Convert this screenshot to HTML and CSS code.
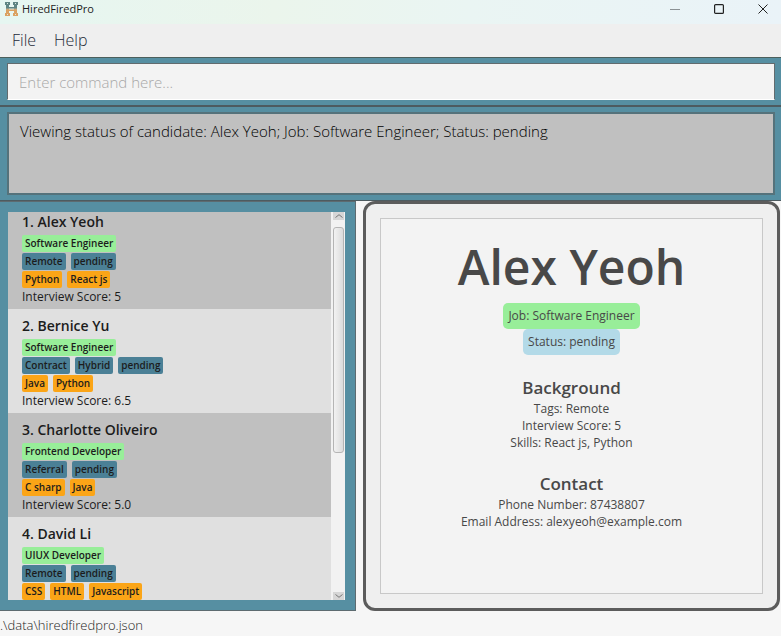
FILE: index.html
```html
<!DOCTYPE html>
<html lang="en">
<head>
<meta charset="utf-8">
<title>HiredFiredPro</title>
<link rel="stylesheet" href="styles.css">
</head>
<body>
<header class="titlebar">
  <svg class="logo" viewBox="0 0 13 14" aria-hidden="true">
    <path fill="#5f8583" d="M0 0h5v3H4v2h5V3H8V0h5v3h-1v4H1V3H0z"/>
    <path fill="#dba263" d="M1 7h11v4h1v3H8v-3h1V9H4v2h1v3H0v-3h1z"/>
    <path fill="#dfe9e2" d="M2 1h1v1H2zM10 1h1v1h-1zM2 12h1v1H2zM10 12h1v1h-1zM4 6.500h5v1H4z"/>
    <path fill="#b9a888" d="M1 6.500h3v1H1zM9 6.500h3v1H9z"/>
  </svg>
  <span class="app-name">HiredFiredPro</span>
  <div class="window-buttons">
    <button type="button" aria-label="Minimize"><svg viewBox="0 0 10 10"><path d="M0 5.500h10" stroke="#8b9194"/></svg></button>
    <button type="button" aria-label="Maximize"><svg viewBox="0 0 10 10"><rect x=".6" y=".6" width="8.800" height="8.800" rx="1" stroke-width="1.200"/></svg></button>
    <button type="button" aria-label="Close"><svg viewBox="0 0 10 10"><path d="M.5.5l9 9M9.500.5l-9 9"/></svg></button>
  </div>
</header>
<nav class="menubar">
  <button type="button">File</button>
  <button type="button">Help</button>
</nav>
<section class="command">
  <input class="command-box" type="text" placeholder="Enter command here..." aria-label="Command">
</section>
<section class="result">
  <output class="result-box">Viewing status of candidate: Alex Yeoh; Job: Software Engineer; Status: pending</output>
</section>
<main class="content">
  <section class="list-panel">
    <div class="list">
      <ol class="cells">
        <li class="cell">
          <h2>1. Alex Yeoh</h2>
          <div class="tags job"><span>Software Engineer</span></div>
          <div class="tags label"><span>Remote</span><span>pending</span></div>
          <div class="tags skill"><span>Python</span><span>React js</span></div>
          <p>Interview Score: 5</p>
        </li>
        <li class="cell">
          <h2>2. Bernice Yu</h2>
          <div class="tags job"><span>Software Engineer</span></div>
          <div class="tags label"><span>Contract</span><span>Hybrid</span><span>pending</span></div>
          <div class="tags skill"><span>Java</span><span>Python</span></div>
          <p>Interview Score: 6.5</p>
        </li>
        <li class="cell">
          <h2>3. Charlotte Oliveiro</h2>
          <div class="tags job"><span>Frontend Developer</span></div>
          <div class="tags label"><span>Referral</span><span>pending</span></div>
          <div class="tags skill"><span>C sharp</span><span>Java</span></div>
          <p>Interview Score: 5.0</p>
        </li>
        <li class="cell">
          <h2>4. David Li</h2>
          <div class="tags job"><span>UIUX Developer</span></div>
          <div class="tags label"><span>Remote</span><span>pending</span></div>
          <div class="tags skill"><span>CSS</span><span>HTML</span><span>Javascript</span></div>
        </li>
      </ol>
      <div class="scrollbar">
        <button type="button" aria-label="Scroll up"><svg viewBox="0 0 8 4"><path d="M.5 3.500L4 .7l3.500 2.800"/></svg></button>
        <div class="track"><div class="thumb"></div></div>
        <button type="button" aria-label="Scroll down"><svg viewBox="0 0 8 4"><path d="M.5.5L4 3.300 7.500.5"/></svg></button>
      </div>
    </div>
  </section>
  <section class="detail-panel">
    <article class="detail">
      <h1>Alex Yeoh</h1>
      <span class="pill pill-job">Job: Software Engineer</span>
      <span class="pill pill-status">Status: pending</span>
      <h3>Background</h3>
      <p>Tags: Remote</p>
      <p>Interview Score: 5</p>
      <p>Skills: React js, Python</p>
      <h3>Contact</h3>
      <p>Phone Number: 87438807</p>
      <p>Email Address: alexyeoh@example.com</p>
    </article>
  </section>
</main>
<footer class="statusbar">.\data\hiredfiredpro.json</footer>
</body>
</html>
```
FILE: styles.css
```css
* {
  box-sizing: border-box;
}

body {
  margin: 0;
  height: 100vh;
  display: flex;
  flex-direction: column;
  background: #f6f6f6;
  color: #1c1c1c;
  font-family: "Open Sans", "Noto Sans", sans-serif;
  overflow: hidden;
}

h1, h2, h3, p, ol {
  margin: 0;
  padding: 0;
}

button {
  border: 0;
  padding: 0;
  background: none;
  font: inherit;
  color: inherit;
}

.titlebar {
  flex: none;
  height: 24px;
  display: flex;
  align-items: center;
  padding: 0 13px 6px 5px;
  background: linear-gradient(90deg, #e6f6f1, #ebf5ec 35%, #eaf5f3 60%, #eaf3f8);
}

.logo {
  width: 13px;
  height: 14px;
}

.app-name {
  margin-left: 4px;
  font-size: 11px;
  line-height: 16px;
}

.window-buttons {
  margin-left: auto;
  display: flex;
  gap: 34px;
}

.window-buttons button {
  display: flex;
}

.window-buttons svg {
  width: 10px;
  height: 10px;
  fill: none;
  stroke: #222;
}

.menubar {
  flex: none;
  height: 33px;
  display: flex;
  gap: 18px;
  padding: 0 12px 2px;
  background: #efefef;
  color: #1d2a38;
  font-size: 16px;
  font-weight: 300;
}

.command {
  flex: none;
  padding: 5px 6px 5px 7px;
  background: #568fa2;
  border-top: 1px solid #4c5f5c;
}

.command-box {
  display: block;
  width: 100%;
  height: 37px;
  padding: 0 11px;
  border: 1px solid #626b6e;
  border-bottom-color: #fff;
  border-radius: 0;
  background: #f3f3f3;
  font: 300 15px "Open Sans", "Noto Sans", sans-serif;
}

.command-box::placeholder {
  color: #a8a8a8;
}

.result {
  flex: none;
  padding: 5px 6px 5px 7px;
  background: #568fa2;
  border-top: 2px solid #4d5b60;
  border-bottom: 1px solid #4d5b60;
}

.result-box {
  display: block;
  height: 83px;
  padding: 5px 11px;
  border: 2px solid #55727b;
  background: #c0c0c0;
  color: #000;
  font-size: 15px;
  font-weight: 300;
  line-height: 24px;
}

.content {
  flex: 1;
  min-height: 0;
  display: grid;
  grid-template-columns: 356fr 417fr;
  gap: 7px;
  padding-right: 1px;
}

.list-panel {
  min-height: 0;
  padding: 10px 10px 10px 8px;
  background: #568fa2;
  border: solid #5d6b70;
  border-width: 1px 1px 1px 0;
}

.list {
  height: 100%;
  display: flex;
  background: #f2f2f2;
}

.cells {
  flex: 1;
  overflow: hidden;
  list-style: none;
}

.cell {
  height: 104px;
  padding: 5px 14px 0;
  background: #e0e0e0;
}

.cell:nth-child(odd) {
  background: #c0c0c0;
}

/* The list is scrolled down slightly. */
.cell:first-child {
  margin-top: -7px;
}

.cell h2 {
  margin-bottom: 1px;
  font-size: 14px;
  font-weight: 600;
  line-height: 24px;
}

.tags {
  display: flex;
  gap: 5px;
  padding-bottom: 1px;
}

.tags span {
  padding: 0 3px;
  border-radius: 2px;
  font-size: 10px;
  font-weight: 600;
  line-height: 17px;
}

.job span {
  background: #98ee99;
}

.label span {
  background: #4b8096;
}

.skill span {
  background: #fba517;
}

.cell p {
  font-size: 12px;
  line-height: 16px;
}

.scrollbar {
  width: 14px;
  display: flex;
  flex-direction: column;
  padding: 0 1px 0 2px;
}

.scrollbar button {
  height: 8px;
  display: flex;
  align-items: center;
  justify-content: center;
  background: #d6d6d6;
}

.scrollbar svg {
  width: 8px;
  height: 4px;
  fill: none;
  stroke: #777;
}

.track {
  flex: 1;
  padding-top: 7px;
}

.thumb {
  height: 62%;
  border: 1px solid #b5b5b5;
  border-radius: 3px;
  background: linear-gradient(90deg, #f2f2f2, #dcdcdc);
}

.detail-panel {
  min-height: 0;
  padding: 14px;
  border: 3px solid #5c5c5c;
  border-radius: 12px;
  background: #efefef;
}

.detail {
  height: 100%;
  display: flex;
  flex-direction: column;
  align-items: center;
  padding-top: 16px;
  border: 1px solid #c8c8c8;
  background: #f3f3f3;
  color: #484848;
}

.detail h1 {
  font-size: 48px;
  font-weight: 600;
  line-height: 64px;
  margin-bottom: 4px;
}

.pill {
  padding: 0 5px;
  border-radius: 5px;
  font-size: 12px;
  line-height: 26px;
}

.pill-job {
  background: #98ee99;
}

.pill-status {
  background: #b3dae8;
}

.detail h3 {
  margin-top: 20px;
  font-size: 17px;
  font-weight: 600;
  line-height: 25px;
}

.detail p {
  font-size: 12px;
  line-height: 17px;
}

.statusbar {
  flex: none;
  height: 25px;
  font-size: 13px;
  font-weight: 300;
  line-height: 28px;
}
```
